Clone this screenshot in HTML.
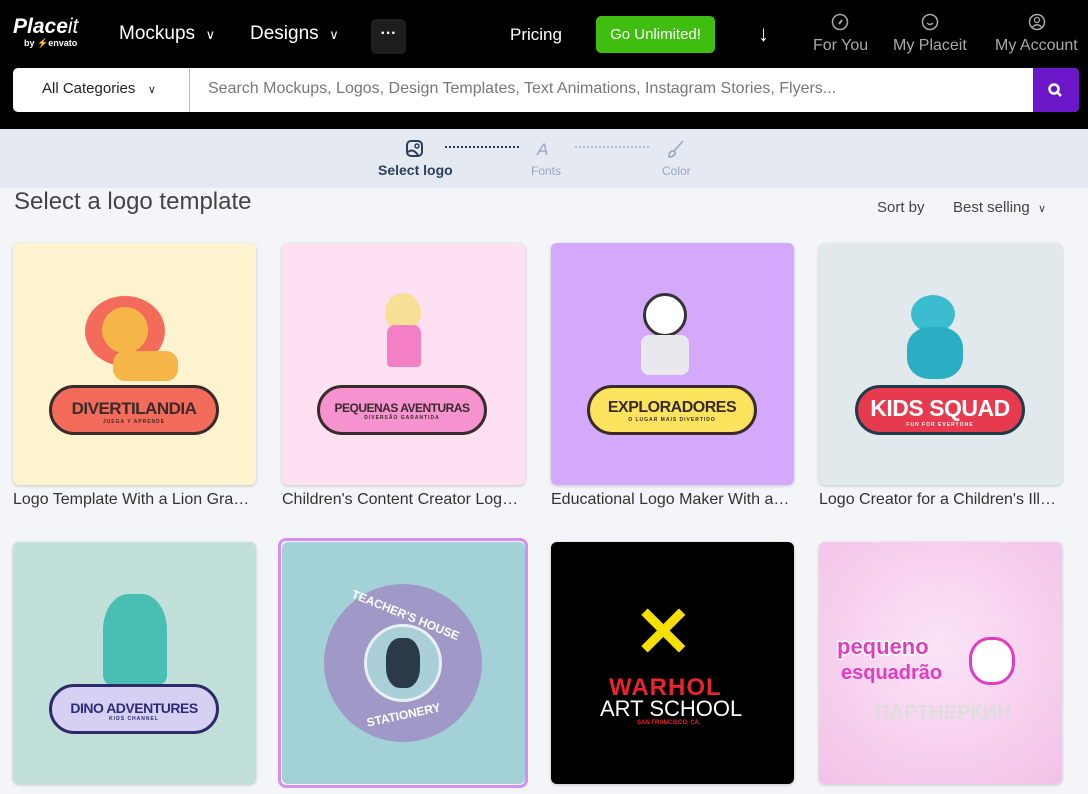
<!DOCTYPE html>
<html><head><meta charset="utf-8"><style>
*{box-sizing:border-box;margin:0;padding:0}
body{width:1088px;height:794px;overflow:hidden;background:#f4f5f8;font-family:"Liberation Sans",sans-serif;position:relative}
.hdr{position:absolute;left:0;top:0;width:1088px;height:129px;background:#000}
.t{position:absolute;white-space:nowrap}
.steps{position:absolute;left:0;top:129px;width:1088px;height:59px;background:#e5eaf2}
.card{position:absolute;width:243px;height:242px;border-radius:6px;box-shadow:0 1px 3px rgba(0,0,0,.2);overflow:hidden}
.cap{position:absolute;font-size:16px;color:#333;white-space:nowrap;width:243px;overflow:hidden;text-overflow:ellipsis}
.pill{position:absolute;border:3px solid #3a2a2a;border-radius:30px;text-align:center;font-weight:bold;letter-spacing:-0.5px;white-space:nowrap}
.pill small{display:block;font-size:5px;font-weight:bold;letter-spacing:1px}
</style></head><body>
<div class="hdr">
 <div class="t" style="left:13px;top:15px;color:#fff;font-size:21px;font-weight:bold;font-style:italic">Place<span style="font-weight:normal">it</span></div>
 <div class="t" style="left:24px;top:38px;color:#fff;font-size:9px;font-weight:bold">by <span style="color:#7fcf3a">⚡</span>envato</div>
 <div class="t" style="left:119px;top:23px;color:#fff;font-size:19px">Mockups&nbsp; <span style="font-size:13px">∨</span></div>
 <div class="t" style="left:250px;top:23px;color:#fff;font-size:19px">Designs&nbsp; <span style="font-size:13px">∨</span></div>
 <div class="t" style="left:371px;top:19px;width:35px;height:35px;background:#1e1e1e;border-radius:5px;color:#fff;text-align:center;font-size:16px;font-weight:bold;line-height:30px">···</div>
 <div class="t" style="left:510px;top:25px;color:#fff;font-size:17px">Pricing</div>
 <div class="t" style="left:596px;top:16px;width:119px;height:37px;background:#3fbe0f;border-radius:5px;color:#fff;font-size:15px;text-align:center;line-height:37px">Go Unlimited!</div>
 <div class="t" style="left:758px;top:21px;color:#fff;font-size:22px">↓</div>
 <svg class="t" style="left:831px;top:13px" width="18" height="18"><circle cx="9" cy="9" r="7.5" fill="none" stroke="#aaa" stroke-width="1.5"/><path d="M11 7 L8 11" stroke="#aaa" stroke-width="2"/></svg>
 <div class="t" style="left:813px;top:37px;color:#aaa;font-size:16px">For You</div>
 <svg class="t" style="left:921px;top:13px" width="18" height="18"><circle cx="9" cy="9" r="7.5" fill="none" stroke="#aaa" stroke-width="1.5"/><path d="M6 10 Q9 13 12 10" fill="none" stroke="#aaa" stroke-width="1.3"/></svg>
 <div class="t" style="left:893px;top:37px;color:#aaa;font-size:16px">My Placeit</div>
 <svg class="t" style="left:1028px;top:13px" width="18" height="18"><circle cx="9" cy="9" r="7.5" fill="none" stroke="#aaa" stroke-width="1.5"/><circle cx="9" cy="7" r="2.5" fill="none" stroke="#aaa" stroke-width="1.3"/><path d="M4.5 14 Q9 9.5 13.5 14" fill="none" stroke="#aaa" stroke-width="1.3"/></svg>
 <div class="t" style="left:995px;top:37px;color:#aaa;font-size:16px">My Account</div>
 <div class="t" style="left:13px;top:68px;width:1066px;height:44px;background:#fff;border-radius:5px"></div>
 <div class="t" style="left:189px;top:68px;width:1px;height:44px;background:#bbb"></div>
 <div class="t" style="left:42px;top:80px;color:#222;font-size:15px">All Categories &nbsp;&nbsp;<span style="font-size:11px">∨</span></div>
 <div class="t" style="left:208px;top:80px;color:#777;font-size:16px">Search Mockups, Logos, Design Templates, Text Animations, Instagram Stories, Flyers...</div>
 <div class="t" style="left:1033px;top:68px;width:46px;height:44px;background:#6b16c8;border-radius:0 5px 5px 0"></div>
 <svg class="t" style="left:1047px;top:82px" width="17" height="17"><circle cx="7" cy="7" r="4.5" fill="none" stroke="#fff" stroke-width="2.5"/><path d="M10 10 L14 14" stroke="#fff" stroke-width="2.5"/></svg>
</div>
<div class="steps">
 <svg class="t" style="left:405px;top:10px" width="20" height="20"><rect x="2" y="2" width="15" height="15" rx="4" fill="none" stroke="#2c3e58" stroke-width="2"/><circle cx="12" cy="7" r="2" fill="none" stroke="#2c3e58" stroke-width="1.5"/><path d="M3 13 Q8 9 13 16" fill="none" stroke="#2c3e58" stroke-width="2"/></svg>
 <div class="t" style="left:445px;top:17px;width:74px;border-top:2px dotted #2c3e58"></div>
 <div class="t" style="left:378px;top:33px;color:#2c3e58;font-size:14px;font-weight:bold">Select logo</div>
 <div class="t" style="left:537px;top:11px;color:#9aa6c0;font-size:17px;font-style:italic">A</div>
 <div class="t" style="left:531px;top:35px;color:#9aa6c0;font-size:12px">Fonts</div>
 <div class="t" style="left:575px;top:17px;width:74px;border-top:2px dotted #b0bbd0"></div>
 <svg class="t" style="left:666px;top:10px" width="20" height="20"><path d="M17 2 L8 12 M3 18 Q3 12 7 12 Q10 13 9 15 Q7 18 3 18Z" fill="none" stroke="#9aa6c0" stroke-width="1.6"/></svg>
 <div class="t" style="left:662px;top:35px;color:#9aa6c0;font-size:12px">Color</div>
</div>
<div class="t" style="left:14px;top:188px;color:#444;font-size:24px">Select a logo template</div>
<div class="t" style="left:877px;top:199px;color:#444;font-size:15px">Sort by</div>
<div class="t" style="left:953px;top:199px;color:#444;font-size:15px">Best selling &nbsp;<span style="font-size:11px">∨</span></div>

<div class="card" style="left:13px;top:243px;background:#fef3cf">
 <div class="t" style="left:72px;top:53px;width:80px;height:70px;border-radius:50%;background:#f26b5b"></div>
 <div class="t" style="left:89px;top:64px;width:46px;height:46px;border-radius:50%;background:#f6b547"></div>
 <div class="t" style="left:100px;top:108px;width:65px;height:30px;border-radius:12px;background:#f6b547"></div>
 <div class="pill" style="left:36px;top:142px;width:170px;height:50px;background:#f26b5b;font-size:17px;padding-top:11px;color:#3a2a2a">DIVERTILANDIA<small>JUEGA Y APRENDE</small></div>
</div>
<div class="cap" style="left:13px;top:491px">Logo Template With a Lion Graphic</div>

<div class="card" style="left:282px;top:243px;background:#fde0f1">
 <div class="t" style="left:103px;top:50px;width:36px;height:40px;border-radius:50%;background:#f8df96"></div>
 <div class="t" style="left:105px;top:82px;width:34px;height:42px;border-radius:8px 8px 4px 4px;background:#f37fc5"></div>
 <div class="pill" style="left:35px;top:142px;width:170px;height:50px;background:#f592cf;font-size:12px;padding-top:13px;color:#3a2a2a">PEQUENAS AVENTURAS<small>DIVERSÃO GARANTIDA</small></div>
</div>
<div class="cap" style="left:282px;top:491px">Children's Content Creator Logo Maker</div>

<div class="card" style="left:551px;top:243px;background:#d4a8fb">
 <div class="t" style="left:92px;top:50px;width:44px;height:44px;border-radius:50%;background:#fff;border:3px solid #333"></div>
 <div class="t" style="left:90px;top:92px;width:48px;height:40px;border-radius:8px;background:#e8e8ee"></div>
 <div class="pill" style="left:36px;top:142px;width:170px;height:50px;background:#fbe35e;font-size:16px;padding-top:11px;color:#3a2a2a">EXPLORADORES<small>O LUGAR MAIS DIVERTIDO</small></div>
</div>
<div class="cap" style="left:551px;top:491px">Educational Logo Maker With an Astronaut</div>

<div class="card" style="left:819px;top:243px;background:#e2e9ec">
 <div class="t" style="left:92px;top:52px;width:44px;height:38px;border-radius:50%;background:#3bbcd0"></div>
 <div class="t" style="left:88px;top:84px;width:56px;height:52px;border-radius:40%;background:#2aaec4"></div>
 <div class="pill" style="left:36px;top:142px;width:170px;height:50px;background:#e83a4f;font-size:23px;padding-top:7px;color:#fff;border-color:#1f3b4a">KIDS SQUAD<small>FUN FOR EVERYONE</small></div>
</div>
<div class="cap" style="left:819px;top:491px">Logo Creator for a Children's Illustrated Cartoon</div>

<div class="card" style="left:13px;top:542px;background:#c2e0da">
 <div class="t" style="left:90px;top:52px;width:64px;height:90px;border-radius:40% 40% 10% 10%;background:#48bfb2"></div>
 <div class="pill" style="left:36px;top:142px;width:170px;height:50px;background:#d6d0f3;font-size:14px;padding-top:13px;color:#2c2a7a;border-color:#2c2a6a">DINO ADVENTURES<small>KIDS CHANNEL</small></div>
</div>

<div class="t" style="left:278px;top:538px;width:250px;height:250px;border:3px solid #d68ef6;border-radius:8px"></div>
<div class="card" style="left:282px;top:542px;background:#a3d1d8;box-shadow:none">
 <div class="t" style="left:42px;top:42px;width:158px;height:158px;border-radius:50%;background:#a098c6"></div>
 <div class="t" style="left:82px;top:82px;width:78px;height:78px;border-radius:50%;background:#a9cfd9;border:3px solid #e8f0f4"></div>
 <div class="t" style="left:104px;top:96px;width:34px;height:50px;border-radius:40%;background:#2a3a48"></div>
 <div class="t" style="left:66px;top:66px;color:#fff;font-size:12px;font-weight:bold;transform:rotate(22deg)">TEACHER'S HOUSE</div>
 <div class="t" style="left:84px;top:166px;color:#fff;font-size:12px;font-weight:bold;transform:rotate(-12deg)">STATIONERY</div>
</div>

<div class="card" style="left:551px;top:542px;background:#000">
 <div class="t" style="left:83px;top:55px;color:#f5e000;font-size:70px;font-weight:bold;line-height:70px">✕</div>
 <div class="t" style="left:58px;top:132px;color:#e8242e;font-size:24px;font-weight:bold;letter-spacing:1px">WARHOL</div>
 <div class="t" style="left:49px;top:154px;color:#fff;font-size:22px">ART SCHOOL</div>
 <div class="t" style="left:86px;top:178px;color:#e8242e;font-size:6px;font-weight:bold">SAN FRANCISCO, CA.</div>
</div>

<div class="card" style="left:819px;top:542px;background:radial-gradient(circle at 50% 45%,#fbe4f6,#f4c1e8)">
 <div class="t" style="left:18px;top:92px;color:#e23cbf;font-size:22px;font-weight:bold;-webkit-text-stroke:3px #fff;paint-order:stroke fill">pequeno</div>
 <div class="t" style="left:22px;top:120px;color:#e23cbf;font-size:20px;font-weight:bold">esquadrão</div>
 <div class="t" style="left:150px;top:95px;width:46px;height:48px;border-radius:45%;background:#fff;border:3px solid #e23cbf"></div>
 <div class="t" style="left:56px;top:160px;color:#ddd;font-size:20px;font-weight:bold">ПАРТНЕРКИН</div>
</div>
</body></html>
